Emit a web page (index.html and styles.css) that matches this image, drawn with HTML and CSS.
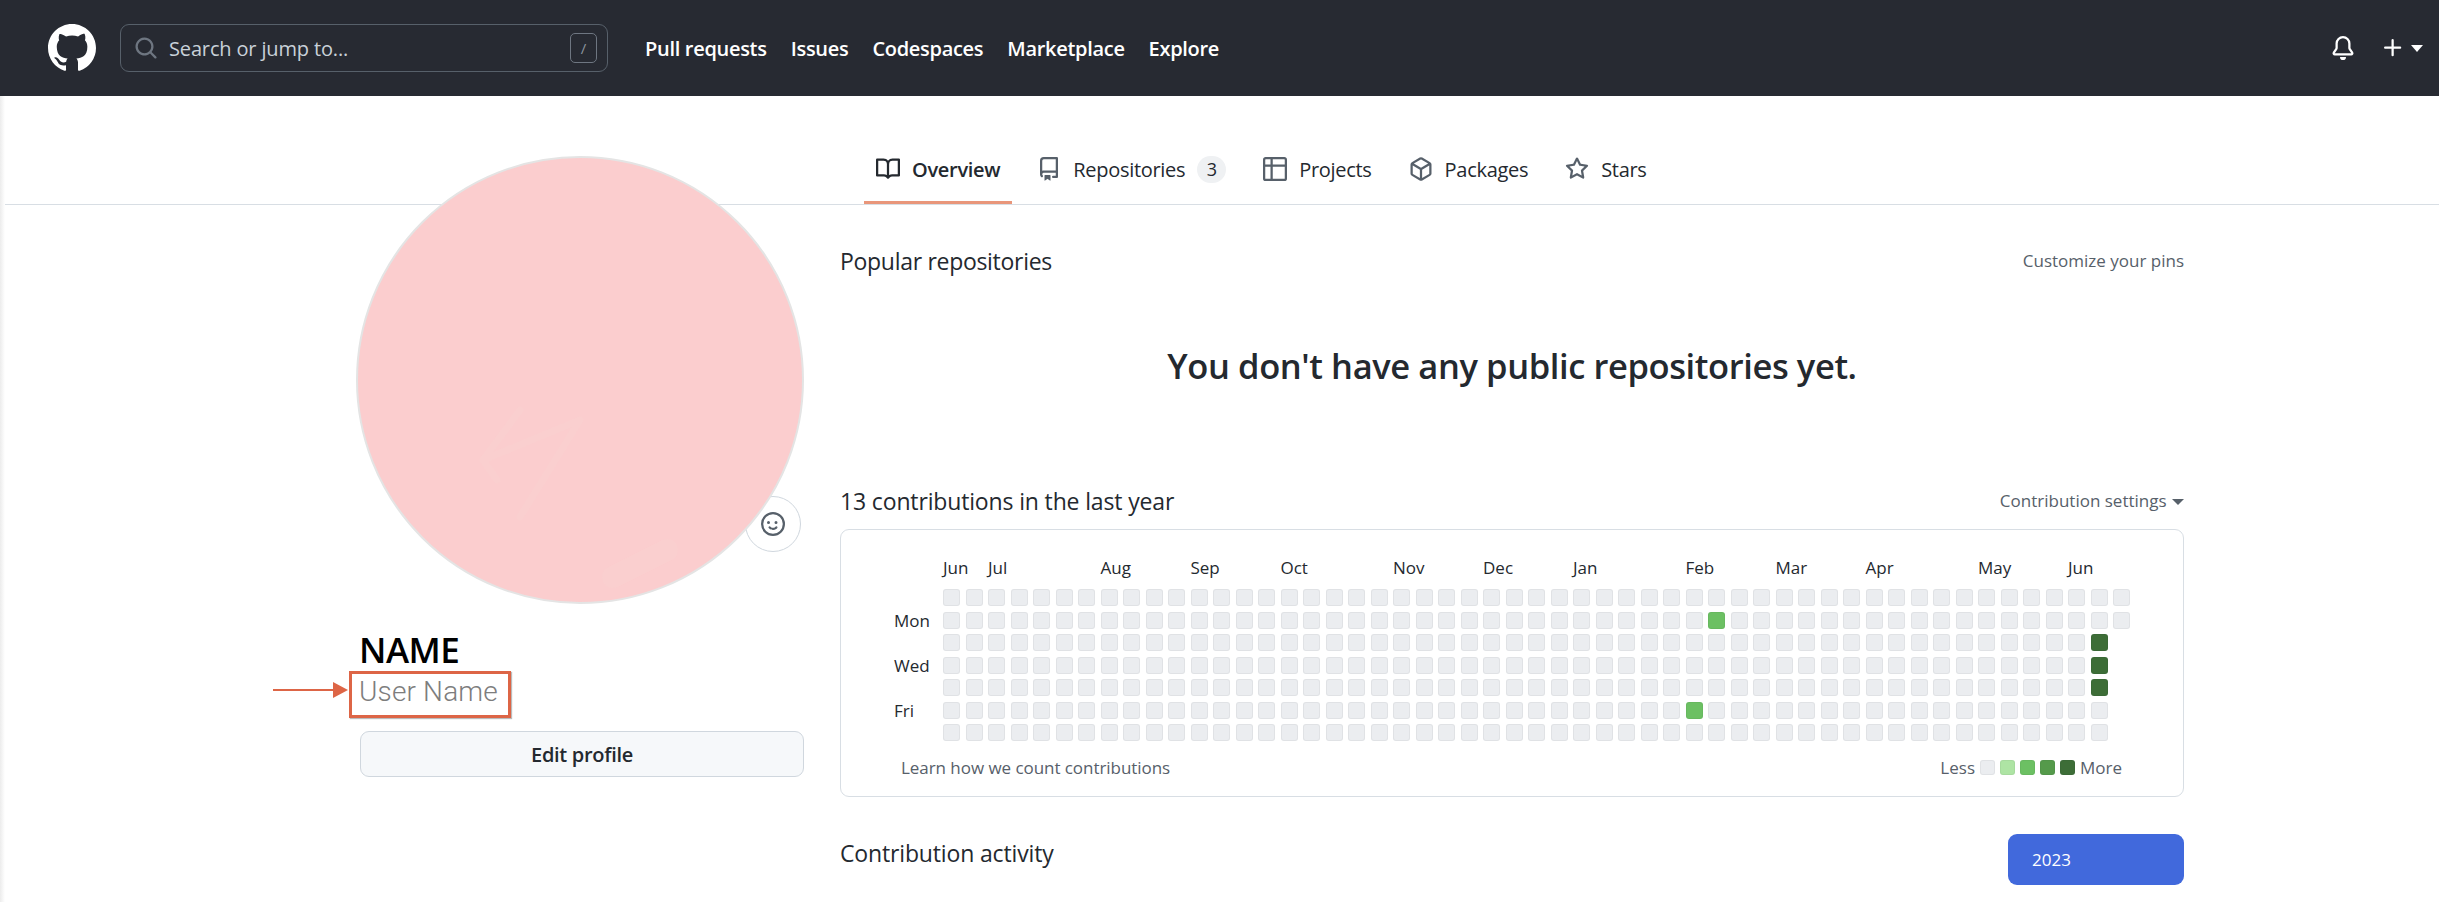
FILE: index.html
```html
<!DOCTYPE html>
<html lang="en">
<head>
<meta charset="utf-8">
<title>Profile</title>
<link rel="stylesheet" href="styles.css">
</head>
<body>
<div class="page">
  <header class="topbar">
    <svg class="logo" viewBox="0 0 16 16"><path fill="#fff" d="M8 0C3.58 0 0 3.58 0 8c0 3.54 2.29 6.53 5.47 7.59.4.07.55-.17.55-.38 0-.19-.01-.82-.01-1.49-2.01.37-2.53-.49-2.69-.94-.09-.23-.48-.94-.82-1.13-.28-.15-.68-.52-.01-.53.63-.01 1.08.58 1.23.82.72 1.21 1.87.87 2.33.66.07-.52.28-.87.51-1.07-1.78-.2-3.64-.89-3.64-3.95 0-.87.31-1.59.82-2.15-.08-.2-.36-1.02.08-2.12 0 0 .67-.21 2.2.82.64-.18 1.32-.27 2-.27.68 0 1.36.09 2 .27 1.53-1.04 2.2-.82 2.2-.82.44 1.1.16 1.92.08 2.12.51.56.82 1.27.82 2.15 0 3.07-1.87 3.75-3.65 3.95.29.25.54.73.54 1.48 0 1.07-.01 1.93-.01 2.2 0 .21.15.46.55.38A8.013 8.013 0 0016 8c0-4.42-3.58-8-8-8z"/></svg>
    <div class="search">
      <svg class="search-icon" viewBox="0 0 16 16"><path fill="#6e7681" d="M11.5 7a4.499 4.499 0 11-8.998 0A4.499 4.499 0 0111.5 7zm-.82 4.74a6 6 0 111.06-1.06l3.04 3.04a.75.75 0 11-1.06 1.06l-3.04-3.04z"/></svg>
      <span class="search-text">Search or jump to...</span>
      <span class="slash">/</span>
    </div>
    <nav class="mainnav">
      <a>Pull requests</a><a>Issues</a><a>Codespaces</a><a>Marketplace</a><a>Explore</a>
    </nav>
    <div class="top-actions">
      <svg class="bell" viewBox="0 0 16 16"><path fill="#fff" d="M8 16a2 2 0 001.985-1.75c.017-.137-.097-.25-.235-.25h-3.5c-.138 0-.252.113-.235.25A2 2 0 008 16z"/><path fill="#fff" d="M8 1.5A3.5 3.5 0 004.5 5v2.947c0 .346-.102.683-.294.97l-1.703 2.556a.018.018 0 00-.003.01l.001.006c0 .002.002.004.004.006a.017.017 0 00.006.004l.007.001h10.964l.007-.001a.016.016 0 00.006-.004.016.016 0 00.004-.006l.001-.007a.017.017 0 00-.003-.01l-1.703-2.554a1.75 1.75 0 01-.294-.97V5A3.5 3.5 0 008 1.5zM3 5a5 5 0 0110 0v2.947c0 .05.015.098.042.139l1.703 2.555A1.518 1.518 0 0113.482 13H2.518a1.518 1.518 0 01-1.263-2.36l1.703-2.554A.25.25 0 003 7.947V5z"/></svg>
      <svg class="plus" viewBox="0 0 16 16"><path fill="#fff" d="M7.75 2a.75.75 0 01.75.75V7h4.25a.75.75 0 110 1.5H8.5v4.25a.75.75 0 11-1.5 0V8.5H2.75a.75.75 0 010-1.5H7V2.75A.75.75 0 017.75 2z"/></svg>
      <span class="caret caret-white"></span>
    </div>
  </header>

  <div class="tabbar">
    <a class="tab tab-active">
      <svg class="tab-icon" viewBox="0 0 16 16"><path d="M0 1.75A.75.75 0 01.75 1h4.253c1.227 0 2.317.59 3 1.501A3.744 3.744 0 0111.006 1h4.245a.75.75 0 01.75.75v10.5a.75.75 0 01-.75.75h-4.507a2.25 2.25 0 00-1.591.659l-.622.621a.75.75 0 01-1.06 0l-.622-.621A2.25 2.25 0 005.258 13H.75a.75.75 0 01-.75-.75V1.75zm8.755 3a2.25 2.25 0 012.25-2.25H14.5v9h-3.757c-.71 0-1.4.201-1.992.572l.004-7.322zm-1.504 7.324l.004-5.073-.002-2.253A2.25 2.25 0 005.003 2.5H1.5v9h3.757a3.75 3.75 0 011.994.574z"/></svg>
      <span>Overview</span>
    </a>
    <a class="tab">
      <svg class="tab-icon" viewBox="0 0 16 16"><path d="M2 2.5A2.5 2.5 0 014.5 0h8.75a.75.75 0 01.75.75v12.5a.75.75 0 01-.75.75h-2.5a.75.75 0 110-1.5h1.75v-2h-8a1 1 0 00-.714 1.7.75.75 0 01-1.072 1.05A2.495 2.495 0 012 11.5v-9zm10.5-1V9h-8c-.356 0-.694.074-1 .208V2.5a1 1 0 011-1h8zM5 12.25v3.25a.25.25 0 00.4.2l1.45-1.087a.25.25 0 01.3 0L8.6 15.7a.25.25 0 00.4-.2v-3.25a.25.25 0 00-.25-.25h-3.5a.25.25 0 00-.25.25z"/></svg>
      <span>Repositories</span><span class="counter">3</span>
    </a>
    <a class="tab">
      <svg class="tab-icon" viewBox="0 0 16 16"><path d="M0 1.75C0 .784.784 0 1.75 0h12.5C15.216 0 16 .784 16 1.75v12.5A1.75 1.75 0 0114.25 16H1.75A1.75 1.75 0 010 14.25V1.75zM6.5 6.5v8h7.75a.25.25 0 00.25-.25V6.5h-8zM14.5 5V1.75a.25.25 0 00-.25-.25H6.5V5h8zM5 6.5H1.5v7.75c0 .138.112.25.25.25H5v-8zm0-1.5V1.5H1.75a.25.25 0 00-.25.25V5H5z"/></svg>
      <span>Projects</span>
    </a>
    <a class="tab">
      <svg class="tab-icon" viewBox="0 0 16 16"><path d="M8.878.392a1.75 1.75 0 00-1.756 0l-5.25 3.045A1.75 1.75 0 001 4.951v6.098c0 .624.332 1.2.872 1.514l5.25 3.045a1.75 1.75 0 001.756 0l5.25-3.045c.54-.313.872-.89.872-1.514V4.951c0-.624-.332-1.2-.872-1.514L8.878.392zM7.875 1.69a.25.25 0 01.25 0l4.63 2.685L8 7.133 3.245 4.375l4.63-2.685zM2.5 5.677v5.372c0 .09.047.171.125.216l4.625 2.683V8.432L2.5 5.677zm6.25 8.271l4.625-2.683a.25.25 0 00.125-.216V5.677L8.75 8.432v5.516z"/></svg>
      <span>Packages</span>
    </a>
    <a class="tab">
      <svg class="tab-icon" viewBox="0 0 16 16"><path d="M8 .25a.75.75 0 01.673.418l1.882 3.815 4.21.612a.75.75 0 01.416 1.279l-3.046 2.97.719 4.192a.75.75 0 01-1.088.791L8 12.347l-3.766 1.98a.75.75 0 01-1.088-.79l.72-4.194L.818 6.374a.75.75 0 01.416-1.28l4.21-.611L7.327.668A.75.75 0 018 .25zm0 2.445L6.615 5.5a.75.75 0 01-.564.41l-3.097.45 2.24 2.184a.75.75 0 01.216.664l-.528 3.084 2.769-1.456a.75.75 0 01.698 0l2.77 1.456-.53-3.084a.75.75 0 01.216-.664l2.24-2.183-3.096-.45a.75.75 0 01-.564-.41L8 2.694v.001z"/></svg>
      <span>Stars</span>
    </a>
  </div>

  <div class="content">
    <aside class="sidebar">
      <div class="avatar-wrap">
        <button class="emoji">
          <svg class="emoji-icon" viewBox="0 0 16 16"><path fill="#57606a" d="M8 0a8 8 0 110 16A8 8 0 018 0zM1.5 8a6.5 6.5 0 1013 0 6.5 6.5 0 00-13 0zm3.82 1.636a.75.75 0 011.038.175l.007.009c.103.118.22.222.35.31.264.178.683.37 1.285.37.602 0 1.02-.192 1.285-.371.13-.088.247-.192.35-.31l.007-.008a.75.75 0 111.222.87l-.614-.431c.614.43.614.431.613.431v.001l-.001.002-.002.003-.005.007-.014.019a1.984 1.984 0 01-.184.213c-.16.166-.338.316-.53.445-.63.418-1.37.638-2.127.629-.946 0-1.652-.308-2.126-.63a3.32 3.32 0 01-.715-.657l-.014-.02-.005-.006-.002-.003v-.002h-.001l.613-.432-.614.43a.75.75 0 01.183-1.044h.001zM5 8a1 1 0 100-2 1 1 0 000 2zm6-1a1 1 0 11-2 0 1 1 0 012 0z"/></svg>
        </button>
        <div class="avatar">
          <svg class="avatar-art" viewBox="0 0 444 444"><path class="art-line" d="M162 252L125 302 222 262 162 359M125 302l14 20"/><path class="art-wide" d="M255 419l54-27"/></svg>
        </div>
      </div>
      <h1 class="fullname">NAME</h1>
      <div class="username">
        User Name
        <span class="callout"></span>
        <svg class="arrow" viewBox="0 0 75 16"><path fill="#dd6546" d="M0 7h60V0l15 8-15 8V9H0z"/></svg>
      </div>
      <button class="edit">Edit profile</button>
    </aside>

    <main class="main">
      <div class="row-head row-first">
        <h2 class="title">Popular repositories</h2>
        <a class="side-link">Customize your pins</a>
      </div>
      <p class="empty">You don't have any public repositories yet.</p>
      <div class="row-head row-contrib">
        <h2 class="title title-wide">13 contributions in the last year</h2>
        <a class="side-link">Contribution settings <span class="caret caret-gray"></span></a>
      </div>
      <section class="calendar">
        <div class="months">
          <span class="m0">Jun</span><span class="m1">Jul</span><span class="m2">Aug</span><span class="m3">Sep</span><span class="m4">Oct</span><span class="m5">Nov</span><span class="m6">Dec</span><span class="m7">Jan</span><span class="m8">Feb</span><span class="m9">Mar</span><span class="m10">Apr</span><span class="m11">May</span><span class="m12">Jun</span>
        </div>
        <div class="cal-body">
          <div class="days"><span></span><span>Mon</span><span></span><span>Wed</span><span></span><span>Fri</span><span></span></div>
          <div class="cells" id="cells"></div>
        </div>
        <div class="cal-foot">
          <a class="learn">Learn how we count contributions</a>
          <div class="legend">
            <span>Less</span>
            <i class="sw l0"></i><i class="sw l1"></i><i class="sw l2"></i><i class="sw l3"></i><i class="sw l4"></i>
            <span>More</span>
          </div>
        </div>
      </section>
      <div class="activity">
        <h2 class="title title-wide title-activity">Contribution activity</h2>
        <a class="year">2023</a>
      </div>
    </main>
  </div>
</div>
<script src="cells.js"></script>
</body>
</html>
```
FILE: styles.css
```css
* { box-sizing: border-box; }
html, body { margin: 0; height: 100%; overflow: hidden; background: #fff; }
body { font-family: "Open Sans", "Noto Sans", "Liberation Sans", sans-serif; color: #24292f; }
svg path { fill-rule: evenodd; }
.page { height: 902px; overflow: hidden; position: relative; }
.page::after { content: ""; position: absolute; left: 0; top: 96px; bottom: 0; width: 5px; background: linear-gradient(90deg, #ececec, #fff); }

.topbar { height: 96px; background: #272a32; display: flex; align-items: center; padding-left: 48px; }
.logo { width: 48px; height: 48px; flex: none; }
.search { width: 488px; height: 48px; margin-left: 24px; border: 1px solid #57606a; border-radius: 9px; display: flex; align-items: center; padding: 0 10px 0 13px; }
.search-icon { width: 24px; height: 24px; flex: none; }
.search-text { margin-left: 11px; font-size: 20px; color: #c9d1d9; flex: 1; white-space: nowrap; letter-spacing: -0.15px; }
.slash { width: 27px; height: 30px; border: 1px solid #6e7681; border-radius: 5px; font-size: 15px; line-height: 28px; text-align: center; color: #8b949e; }
.mainnav { display: flex; margin-left: 37px; gap: 24px; }
.mainnav a { font-size: 20px; font-weight: 600; color: #fff; white-space: nowrap; letter-spacing: -0.3px; }
.top-actions { margin-left: auto; display: flex; align-items: center; padding-right: 16px; }
.bell { width: 24px; height: 24px; flex: none; }
.plus { width: 24px; height: 24px; margin-left: 26px; flex: none; }
.caret { display: inline-block; width: 0; height: 0; border-style: solid; border-width: 7px 6px 0; border-color: transparent; }
.caret-white { border-top-color: #fff; margin-left: 6px; }
.caret-gray { border-top-color: #57606a; border-width: 6px 6px 0; vertical-align: 2px; margin-left: 1px; }

.tabbar { height: 109px; border-bottom: 1px solid #d8dee4; padding-left: 864px; display: flex; gap: 13px; align-items: stretch; }
.tab { display: flex; align-items: center; padding: 38px 12px 0; height: 108px; font-size: 20px; color: #24292f; white-space: nowrap; letter-spacing: -0.3px; }
.tab-active { font-weight: 600; border-bottom: 3px solid #e9967a; padding-top: 41px; }
.tab-icon { width: 24px; height: 24px; fill: #57606a; margin-right: 12px; flex: none; }
.tab-active .tab-icon { fill: #24292f; }
.counter { margin-left: 12px; min-width: 29px; height: 27px; border-radius: 14px; background: #eff1f3; font-size: 18px; line-height: 27px; text-align: center; }

.content { display: flex; padding-left: 360px; gap: 36px; }
.sidebar { width: 444px; flex: none; margin-top: -49px; position: relative; z-index: 1; }
.avatar-wrap { position: relative; width: 448px; height: 448px; margin-left: -4px; }
.avatar { position: relative; width: 448px; height: 448px; border-radius: 50%; border: 2px solid #e4e4e4; background: #fbcdce; overflow: hidden; }
.avatar-art { display: block; width: 100%; height: 100%; }
.art-line { fill: none; stroke: #facfcf; stroke-width: 7; stroke-linecap: round; stroke-linejoin: round; }
.art-wide { fill: none; stroke: #facfcf; stroke-width: 22; stroke-linecap: round; }
.emoji { position: absolute; left: 389px; top: 340px; width: 56px; height: 56px; border-radius: 50%; border: 1px solid #d0d7de; background: #fff; padding: 0; display: flex; align-items: center; justify-content: center; }
.emoji-icon { width: 24px; height: 24px; }
.fullname { margin: 25px 0 0 -1px; font-size: 35px; line-height: 42px; font-weight: 600; color: #000; letter-spacing: -0.5px; }
.username { position: relative; margin-top: 3px; margin-left: -1px; font-family: Roboto, sans-serif; font-weight: 300; font-size: 28px; line-height: 36px; color: #7d7d7d; letter-spacing: 0.15px; height: 46px; }
.callout { position: absolute; left: -10px; top: -3px; width: 162px; height: 47px; border: 3px solid #dd6546; box-shadow: 1px 1px 1px #bbb; }
.arrow { position: absolute; left: -86px; top: 8px; width: 75px; height: 16px; }
.edit { display: block; width: 100%; height: 46px; margin-top: 11px; border: 1px solid #d0d7de; border-radius: 9px; background: #f6f8fa; font-family: inherit; font-size: 20px; font-weight: 600; color: #24292f; padding: 0; letter-spacing: -0.3px; }

.main { width: 1344px; flex: none; }
.row-head { display: flex; justify-content: space-between; align-items: center; height: 30px; }
.row-first { margin-top: 41px; }
.row-contrib { margin-top: 92px; }
.title { margin: 0; font-size: 23px; font-weight: 400; line-height: 30px; letter-spacing: -0.3px; white-space: nowrap; }
.title-wide { letter-spacing: -0.15px; }
.side-link { font-size: 17px; line-height: 29px; margin-bottom: 1px; color: #57606a; white-space: nowrap; }
.empty { margin: 64px 0 0; height: 54px; line-height: 52px; text-align: center; font-size: 34.5px; font-weight: 600; letter-spacing: -0.4px; color: #24292f; }

.calendar { margin-top: 13px; height: 268px; border: 1px solid #d8dee4; border-radius: 9px; }
.months { display: grid; grid-template-columns: repeat(53, 17px); column-gap: 5.5px; margin: 25px 0 8px 102px; height: 26px; line-height: 26px; font-size: 17px; white-space: nowrap; }
.m0 { grid-column-start: 1; } .m1 { grid-column-start: 3; } .m2 { grid-column-start: 8; } .m3 { grid-column-start: 12; }
.m4 { grid-column-start: 16; } .m5 { grid-column-start: 21; } .m6 { grid-column-start: 25; } .m7 { grid-column-start: 29; }
.m8 { grid-column-start: 34; } .m9 { grid-column-start: 38; } .m10 { grid-column-start: 42; } .m11 { grid-column-start: 47; } .m12 { grid-column-start: 51; }
.cal-body { display: flex; padding-left: 53px; }
.days { width: 49px; flex: none; display: grid; grid-template-rows: repeat(7, 17px); row-gap: 5.5px; font-size: 17px; line-height: 17px; }
.cells { display: grid; grid-template-columns: repeat(53, 17px); grid-template-rows: repeat(7, 17px); gap: 5.5px; grid-auto-flow: column; }
.cell { display: block; border-radius: 3px; background: #ebedf0; border: 1px solid rgba(27,31,35,.05); }
.l0 { background: #ebedf0; } .l1 { background: #aee4a4; } .l2 { background: #6cc063; } .l3 { background: #559a4b; } .l4 { background: #3d6d37; }
.cal-foot { display: flex; justify-content: space-between; align-items: center; height: 24px; margin-top: 14px; padding: 0 61px 0 60px; font-size: 17px; color: #57606a; }
.learn { letter-spacing: -0.05px; }
.legend { display: flex; align-items: center; gap: 5px; }
.sw { display: block; width: 15px; height: 15px; border-radius: 3px; border: 1px solid rgba(27,31,35,.05); }
.activity { display: flex; justify-content: space-between; margin-top: 37px; }
.title-activity { line-height: 39px; }
.year { width: 176px; height: 51px; background: #4169dc; border-radius: 9px; color: #fff; font-size: 17px; line-height: 51px; padding-left: 24px; }
```
FILE: cells.js
```js
var levels = {};
levels[33 * 7 + 5] = 2;
levels[34 * 7 + 1] = 2;
levels[51 * 7 + 2] = 4;
levels[51 * 7 + 3] = 4;
levels[51 * 7 + 4] = 4;
var root = document.getElementById('cells');
for (var i = 0; i < 52 * 7 + 2; i++) {
  var c = document.createElement('i');
  c.className = 'cell l' + (levels[i] || 0);
  root.appendChild(c);
}
```
